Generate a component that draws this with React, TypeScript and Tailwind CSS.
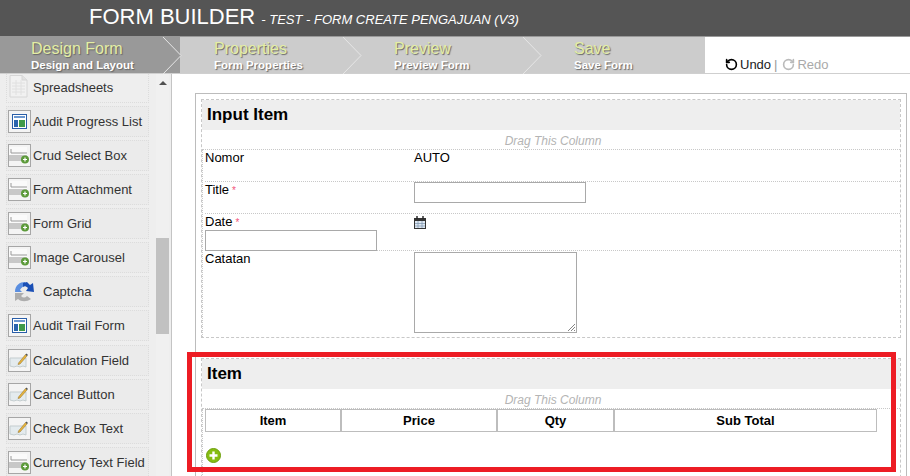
import { RotateCcw, RotateCw } from 'lucide-react'

type IconKind = 'sheet' | 'table' | 'field' | 'captcha' | 'pencil'

const paletteItems: { label: string; icon: IconKind }[] = [
  { label: 'Audit Progress List', icon: 'table' },
  { label: 'Crud Select Box', icon: 'field' },
  { label: 'Form Attachment', icon: 'field' },
  { label: 'Form Grid', icon: 'field' },
  { label: 'Image Carousel', icon: 'field' },
  { label: 'Captcha', icon: 'captcha' },
  { label: 'Audit Trail Form', icon: 'table' },
  { label: 'Calculation Field', icon: 'pencil' },
  { label: 'Cancel Button', icon: 'pencil' },
  { label: 'Check Box Text', icon: 'pencil' },
  { label: 'Currency Text Field', icon: 'field' },
]

const tabs = [
  { title: 'Design Form', sub: 'Design and Layout', width: 'w-[180px]', pad: 'pl-[31px]', active: true },
  { title: 'Properties', sub: 'Form Properties', width: 'w-[180px]', pad: 'pl-[34px]', active: false },
  { title: 'Preview', sub: 'Preview Form', width: 'w-[180px]', pad: 'pl-[34px]', active: false },
  { title: 'Save', sub: 'Save Form', width: 'w-[165px]', pad: 'pl-[34px]', active: false },
]

function PaletteIcon({ kind }: { kind: IconKind }) {
  if (kind === 'captcha') {
    return (
      <svg width="21" height="21" viewBox="0 0 21 21" className="ml-[6px] mr-[8px]">
        <path d="M1 11 C1 4 6 1 11 1 L12 5 C9 5 7 7 6 9 L8 11 Z" fill="#5a8ee0" />
        <path d="M9 2 L13 1 L16 4 L19 2 L20 11 L12 10 L14 7 C12 5 10 5 9 6 Z" fill="#1a4fb5" />
        <path d="M1 12 L10 12 L7 15 C9 17 11 17 13 15 L17 18 C13 21 7 21 4 18 L1 20 Z" fill="#adadad" />
      </svg>
    )
  }
  if (kind === 'sheet') {
    return (
      <svg width="19" height="23" viewBox="0 0 19 23" className="ml-[2px] mr-[5px] mt-[-3px]">
        <path d="M1 .5 H13 L18 5 V22 H1 Z" fill="#f1f1f1" stroke="#d6d6d6" />
        <path d="M13 .5 V5 H18" fill="#e2e2e2" stroke="#d6d6d6" />
        <path d="M3 8 H16 M3 11 H16 M3 14 H16 M3 17 H16 M7 5 V20 M12 5 V20" stroke="#e0e0e0" />
      </svg>
    )
  }
  return (
    <span className="mr-[2px] flex h-[23px] w-[23px] shrink-0 items-center justify-center border border-[#a6a6a6] bg-[#f4f4f4]">
      {kind === 'table' && (
        <svg width="15" height="15" viewBox="0 0 15 15">
          <rect x=".5" y=".5" width="14" height="14" fill="#fff" stroke="#2a5ea8" />
          <rect x="2" y="2" width="11" height="2" fill="#6b97cf" />
          <rect x="2" y="6" width="4" height="7" fill="#2a64ad" />
          <rect x="7" y="6" width="6" height="7" fill="#3f9a4a" />
        </svg>
      )}
      {kind === 'field' && (
        <svg width="21" height="17" viewBox="0 0 21 17">
          <rect x="0" y="0" width="18" height="13" fill="#fafafa" />
          <rect x="0" y="8" width="18" height="6" fill="#c8c8c8" />
          <path d="M2 2 V6 M2 6 H18" stroke="#9a9a9a" />
          <circle cx="16" cy="12.5" r="4" fill="#5c9a3a" />
          <path d="M14 12.5 H18 M16 10.5 V14.5" stroke="#fff" strokeWidth="1.2" />
        </svg>
      )}
      {kind === 'pencil' && (
        <svg width="21" height="19" viewBox="0 0 21 19">
          <path d="M1 7 H17 V16 L14 15 L11 16 L8 15 L5 16 L1 15 Z" fill="#e4ebee" stroke="#c4cdcf" />
          <path d="M9.5 12 L16.5 3.5 L18 5 L11 13 L9 13.5 Z" fill="#e8b53c" stroke="#8a6a2a" strokeWidth=".5" />
          <path d="M16.5 3.5 L17.5 2.5 L19 4 L18 5 Z" fill="#555" />
        </svg>
      )}
    </span>
  )
}

function Palette() {
  return (
    <aside className="relative flex h-[402px] w-[172px] shrink-0 overflow-hidden border-r border-[#c4c4c4] bg-[#eeeeee]">
      <div className="ml-[6px] w-[143px] mt-[-1px]">
        <div className="flex h-[30px] items-center whitespace-nowrap border-x border-b border-dotted border-[#dcdcdc] text-[13px] text-[#333]">
          <PaletteIcon kind="sheet" />
          <span>Spreadsheets</span>
        </div>
        {paletteItems.map((item) => (
          <div
            key={item.label}
            className={`flex h-[31px] items-center whitespace-nowrap border border-dotted border-[#dcdcdc] bg-[#ebebeb] pl-px text-[13px] text-[#333] ${
              item.label === 'Calculation Field' ? 'mt-[4px]' : 'mt-[3px]'
            }`}
          >
            <PaletteIcon kind={item.icon} />
            <span>{item.label}</span>
          </div>
        ))}
      </div>
      <div className="ml-[7px] flex w-[13px] flex-col items-center bg-[#f0f0f0]">
        <span className="mt-[7px] h-0 w-0 border-x-[4px] border-b-[4px] border-x-transparent border-b-[#505050]" />
        <span className="mt-[153px] h-[96px] w-[13px] bg-[#c1c1c1]" />
      </div>
    </aside>
  )
}

function SectionHeader({ title }: { title: string }) {
  return (
    <>
      <div className="flex h-[30px] items-center bg-[#eeeeee] pl-[5px] text-[17px] font-bold text-black">{title}</div>
      <div className="h-[20px] border-b border-dotted border-[#c8c8c8] pl-[4px] pt-[4px] text-center text-[12px] italic leading-[15px] text-[#b4b4b4]">
        Drag This Column
      </div>
    </>
  )
}

function RequiredMark() {
  return <span className="ml-[3px] text-[10px] text-[#f2557a]">*</span>
}

function InputBox({ className }: { className: string }) {
  return <div className={`block border border-[#a9a9a9] bg-white ${className}`} />
}

function CalendarIcon() {
  return (
    <svg width="12" height="13" viewBox="0 0 12 13" className="mt-[2px]">
      <rect x=".5" y="2.5" width="11" height="10" fill="#dfe8f2" stroke="#333" />
      <rect x="1" y="2" width="10" height="3" fill="#333" />
      <path d="M3 0 V3 M9 0 V3" stroke="#222" strokeWidth="1.4" />
      <path d="M1 7.5 H11 M1 10 H11 M4 5 V12 M8 5 V12" stroke="#7b93ad" strokeWidth=".7" />
    </svg>
  )
}

function Canvas() {
  return (
    <main className="h-[402px] flex-1 overflow-hidden bg-white pl-[23px] pr-[3px] pt-[19px]">
      <div className="h-[400px] border border-[#bcbcbc] px-[5px] pt-[5px]">
        <section className="h-[239px] border border-dashed border-[#c8c8c8]">
          <SectionHeader title="Input Item" />
          <div className="border-l border-dotted border-[#c8c8c8] pl-[2px] text-[13px] leading-[15px] text-black">
            <div className="grid h-[32px] grid-cols-[209px_1fr] border-b border-dotted border-[#c8c8c8]">
              <div>Nomor</div>
              <div>AUTO</div>
            </div>
            <div className="grid h-[32px] grid-cols-[209px_1fr] border-b border-dotted border-[#c8c8c8]">
              <div>
                Title
                <RequiredMark />
              </div>
              <InputBox className="h-[21px] w-[172px]" />
            </div>
            <div className="grid h-[37px] grid-cols-[209px_1fr] border-b border-dotted border-[#c8c8c8]">
              <div>
                Date
                <RequiredMark />
                <InputBox className="h-[21px] w-[172px]" />
              </div>
              <div>
                <CalendarIcon />
              </div>
            </div>
            <div className="grid h-[86px] grid-cols-[209px_1fr]">
              <div>Catatan</div>
              <div className="pt-px">
                <div className="relative h-[81px] w-[163px] border border-[#a9a9a9]">
                  <svg width="9" height="9" viewBox="0 0 9 9" className="absolute bottom-0 right-0">
                    <path d="M1 8 L8 1 M4 8 L8 4 M7 8 L8 7" stroke="#777" strokeWidth=".9" />
                  </svg>
                </div>
              </div>
            </div>
          </div>
        </section>
        <section className="mt-[20px] h-[130px] border border-dashed border-[#c8c8c8]">
          <SectionHeader title="Item" />
          <div className="h-[78px] border-l border-dotted border-[#c8c8c8] pl-[2px]">
            <div className="grid h-[23px] w-[672px] grid-cols-[136px_156px_117px_1fr] border border-[#bdbdbd] text-center text-[13px] font-bold leading-[21px] text-black">
              <div className="border-r-2 border-[#bdbdbd]">Item</div>
              <div className="border-r-2 border-[#bdbdbd]">Price</div>
              <div className="border-r-2 border-[#bdbdbd]">Qty</div>
              <div>Sub Total</div>
            </div>
            <svg width="15" height="15" viewBox="0 0 15 15" className="ml-px mt-[16px] block">
              <circle cx="7.5" cy="7.5" r="7" fill="#86bd12" stroke="#6d9e0c" />
              <path d="M3.5 7.5 H11.5 M7.5 3.5 V11.5" stroke="#fff" strokeWidth="2.4" />
            </svg>
          </div>
        </section>
      </div>
    </main>
  )
}

export default function App() {
  return (
    <div className="relative h-[476px] w-[910px] overflow-hidden bg-white font-['Liberation_Sans',Arial,sans-serif]">
      <header className="flex h-[37px] items-baseline border-b border-[#999] bg-[#555555] pl-[89px] pt-[2px] text-white">
        <span className="text-[22px] leading-[30px]">FORM BUILDER</span>
        <span className="ml-[6px] text-[13px] italic">- TEST - FORM CREATE PENGAJUAN (V3)</span>
      </header>
      <nav className="flex h-[37px] border-b border-[#cfcfcf] bg-[#cccccc]">
        {tabs.map((tab) => (
          <div key={tab.title} className={`relative ${tab.width} ${tab.pad} ${tab.active ? 'bg-[#999999]' : ''}`}>
            <div className="mt-[2px] text-[16px] leading-[20px] text-[#e4eea4] [text-shadow:1px_1px_1px_#666]">
              {tab.title}
            </div>
            <div className="text-[11.5px] font-bold leading-[12px] text-white [text-shadow:1px_1px_1px_#666]">
              {tab.sub}
            </div>
            {tab.title !== 'Save' && (
              <svg width="20" height="37" viewBox="0 0 20 37" className="absolute left-[163px] top-0">
                <path d="M0 0 L18 18.5 L0 37" fill={tab.active ? '#999999' : '#cccccc'} stroke="#e6e6e6" />
              </svg>
            )}
          </div>
        ))}
        <div className="flex flex-1 items-end gap-[2px] whitespace-nowrap bg-white pl-[20px] text-[13px] leading-[16px]">
          <RotateCcw size={13} strokeWidth={3} className="mb-[2px] text-black" />
          <span className="text-[#222]">Undo</span>
          <span className="px-px text-[#999]">|</span>
          <RotateCw size={13} strokeWidth={3} className="mb-[2px] ml-[2px] text-[#bbb]" />
          <span className="text-[#aaa]">Redo</span>
        </div>
      </nav>
      <div className="flex">
        <Palette />
        <Canvas />
      </div>
      {/* annotation box drawn on the screenshot */}
      <div className="absolute left-[187px] top-[352px] h-[120px] w-[709px] border-[5px] border-[#ed1c24]" />
    </div>
  )
}
